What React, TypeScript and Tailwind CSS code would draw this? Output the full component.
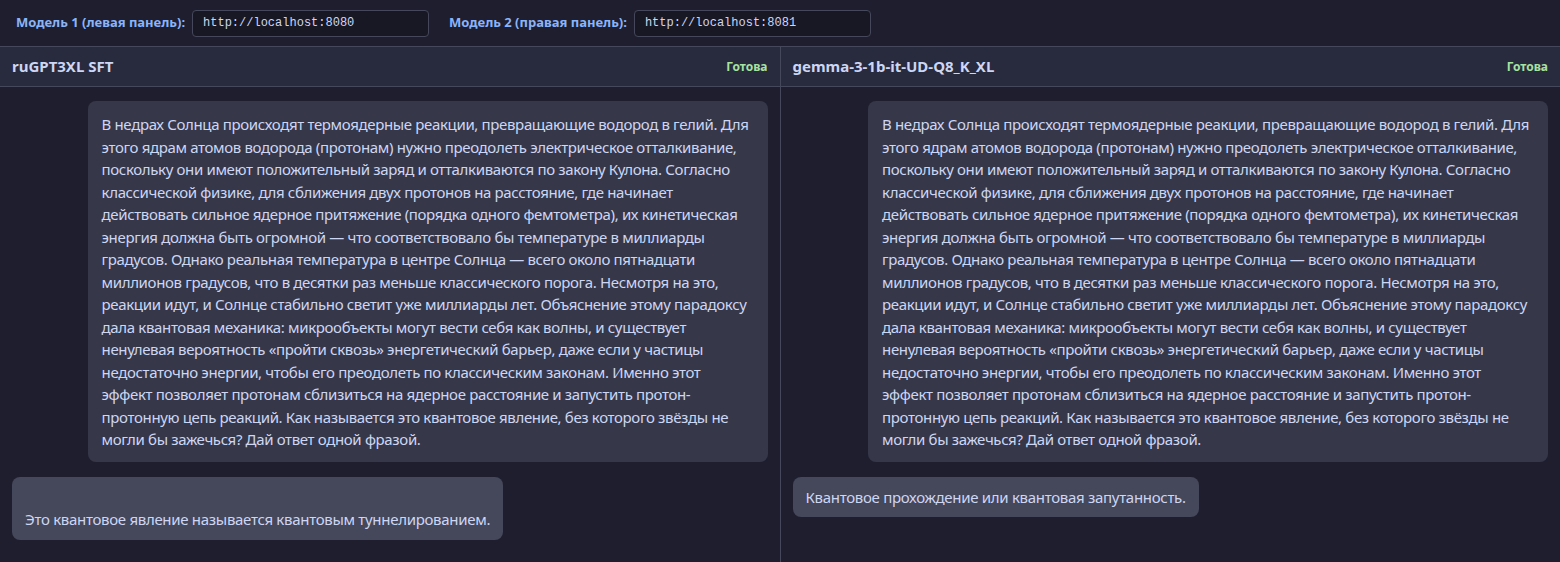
import { useState } from "react";

type Message = {
  role: "user" | "assistant";
  text: string;
};

type Panel = {
  model: string;
  status: string;
  messages: Message[];
};

const PROMPT =
  "В недрах Солнца происходят термоядерные реакции, превращающие водород в гелий. Для этого ядрам атомов водорода (протонам) нужно преодолеть электрическое отталкивание, поскольку они имеют положительный заряд и отталкиваются по закону Кулона. Согласно классической физике, для сближения двух протонов на расстояние, где начинает действовать сильное ядерное притяжение (порядка одного фемтометра), их кинетическая энергия должна быть огромной — что соответствовало бы температуре в миллиарды градусов. Однако реальная температура в центре Солнца — всего около пятнадцати миллионов градусов, что в десятки раз меньше классического порога. Несмотря на это, реакции идут, и Солнце стабильно светит уже миллиарды лет. Объяснение этому парадоксу дала квантовая механика: микрообъекты могут вести себя как волны, и существует ненулевая вероятность «пройти сквозь» энергетический барьер, даже если у частицы недостаточно энергии, чтобы его преодолеть по классическим законам. Именно этот эффект позволяет протонам сблизиться на ядерное расстояние и запустить протон-протонную цепь реакций. Как называется это квантовое явление, без которого звёзды не могли бы зажечься? Дай ответ одной фразой.";

const panels: Panel[] = [
  {
    model: "ruGPT3XL SFT",
    status: "Готова",
    messages: [
      { role: "user", text: PROMPT },
      {
        role: "assistant",
        text: "\nЭто квантовое явление называется квантовым туннелированием.",
      },
    ],
  },
  {
    model: "gemma-3-1b-it-UD-Q8_K_XL",
    status: "Готова",
    messages: [
      { role: "user", text: PROMPT },
      {
        role: "assistant",
        text: "Квантовое прохождение или квантовая запутанность.",
      },
    ],
  },
];

const ChatPanel = ({ panel, last }: { panel: Panel; last: boolean }) => (
  <div
    className={`flex flex-col flex-1 min-w-0 ${
      last ? "" : "border-r border-[#45475a]"
    }`}
  >
    {/* Header */}
    <div className="h-[40px] flex items-center justify-between px-3 bg-[#282a3d] border-b border-[#45475a] shrink-0">
      <span className="text-[15px] font-bold text-[#cdd6f4]">
        {panel.model}
      </span>
      <span className="text-[12px] font-bold text-[#a6e3a1]">
        {panel.status}
      </span>
    </div>

    {/* Messages */}
    <div className="flex-1 flex flex-col gap-[15px] px-3 pt-[14px] overflow-hidden">
      {panel.messages.map((msg, i) =>
        msg.role === "user" ? (
          <div
            key={i}
            className="self-end max-w-[90%] bg-[#363849] rounded-lg px-[14px] pt-3 pb-[11px] text-[15px] leading-[22.5px] tracking-[-0.35px] text-[#cdd6f4] whitespace-pre-wrap"
          >
            {msg.text}
          </div>
        ) : (
          <div
            key={i}
            className="self-start max-w-[90%] bg-[#45475a] rounded-lg px-[13px] py-[9px] text-[15px] leading-[22.5px] tracking-[-0.3px] text-[#cdd6f4] whitespace-pre-wrap"
          >
            {msg.text}
          </div>
        )
      )}
    </div>
  </div>
);

export default function App() {
  const [left, setLeft] = useState("http://localhost:8080");
  const [right, setRight] = useState("http://localhost:8081");

  return (
    <div
      className="h-[562px] flex flex-col bg-[#1e1e2e] overflow-hidden"
      style={{ fontFamily: '"Noto Sans", "Open Sans", sans-serif' }}
    >
      {/* Endpoint settings */}
      <div className="h-[47px] flex items-center px-4 border-b border-[#45475a] shrink-0">
        <label className="flex items-center gap-[7px] text-[13px] font-bold text-[#89b4fa]">
          Модель 1 (левая панель):
          <input
            value={left}
            onChange={(e) => setLeft(e.target.value)}
            className="w-[237px] h-[27px] px-[10px] bg-[#181825] border border-[#45475a] rounded text-[12px] font-normal text-[#cdd6f4] outline-none font-['Liberation_Mono',monospace]"
          />
        </label>
        <label className="ml-5 flex items-center gap-[7px] text-[13px] font-bold text-[#89b4fa]">
          Модель 2 (правая панель):
          <input
            value={right}
            onChange={(e) => setRight(e.target.value)}
            className="w-[237px] h-[27px] px-[10px] bg-[#181825] border border-[#45475a] rounded text-[12px] font-normal text-[#cdd6f4] outline-none font-['Liberation_Mono',monospace]"
          />
        </label>
      </div>

      {/* Side-by-side chats */}
      <div className="flex flex-1 min-h-0">
        {panels.map((p, i) => (
          <ChatPanel key={p.model} panel={p} last={i === panels.length - 1} />
        ))}
      </div>
    </div>
  );
}
